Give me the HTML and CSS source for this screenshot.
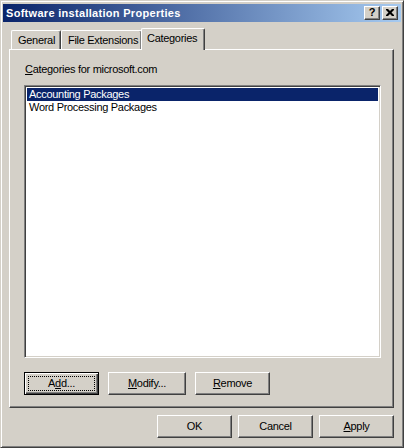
FILE: index.html
```html
<!DOCTYPE html>
<html>
<head>
<meta charset="utf-8">
<link rel="stylesheet" href="styles.css">
</head>
<body>
<div class="window">
  <div class="titlebar">
    <span class="title">Software installation Properties</span>
    <div class="caps">
      <div class="cap help">?</div>
      <div class="cap close">
        <svg width="8" height="7" viewBox="0 0 8 7"><path d="M0 0h2l2 2 2-2h2v1l-2.5 2.5L8 6v1H6L4 5 2 7H0V6l2.5-2.5L0 1z" fill="#000"/></svg>
      </div>
    </div>
  </div>
  <div class="content">
    <div class="tabs">
      <div class="tab t-general">General</div>
      <div class="tab t-ext">File Extensions</div>
      <div class="tab active">Categories</div>
    </div>
    <div class="panel">
      <div class="label"><u>C</u>ategories for microsoft.com</div>
      <div class="listbox">
        <div class="item sel">Accounting Packages</div>
        <div class="item">Word Processing Packages</div>
      </div>
      <div class="btnrow">
        <div class="btn default"><span class="focus">A<u>d</u>d...</span></div>
        <div class="btn wide"><u>M</u>odify...</div>
        <div class="btn"><u>R</u>emove</div>
      </div>
    </div>
    <div class="footer">
      <div class="btn">OK</div>
      <div class="btn">Cancel</div>
      <div class="btn"><u>A</u>pply</div>
    </div>
  </div>
</div>
</body>
</html>
```
FILE: styles.css
```css
* { box-sizing: border-box; }
html, body { margin: 0; padding: 0; background: #D4D0C8; }
body {
  font-family: "Liberation Sans", Arial, sans-serif;
  font-size: 11px;
  letter-spacing: -0.3px;
  color: #000;
}
.window {
  width: 404px;
  height: 448px;
  background: #D4D0C8;
  border: 1px solid;
  border-color: #D4D0C8 #404040 #404040 #D4D0C8;
  box-shadow: inset 1px 1px #FFFFFF, inset -1px -1px #808080;
  padding: 3px 2px 2px 2px;
  display: flex;
  flex-direction: column;
}
.titlebar {
  height: 18px;
  background: linear-gradient(to right, #0A246A, #A6CAF0);
  display: flex;
  align-items: center;
  justify-content: space-between;
  padding: 0 3px 0 3px;
}
.title {
  color: #fff;
  font-weight: bold;
  font-size: 11px;
  letter-spacing: 0.3px;
}
.caps { display: flex; gap: 2px; }
.cap {
  width: 16px;
  height: 14px;
  background: #D4D0C8;
  border: 1px solid;
  border-color: #FFFFFF #404040 #404040 #FFFFFF;
  box-shadow: inset -1px -1px #808080;
  display: flex;
  align-items: center;
  justify-content: center;
  font-weight: bold;
  font-size: 11px;
  letter-spacing: 0;
  line-height: 1;
}
.help { padding-bottom: 1px; }
.close svg { display: block; margin-top: -1px; }
.content {
  flex: 1;
  display: flex;
  flex-direction: column;
  padding: 6px 7px 0 6px;
}
.tabs {
  display: flex;
  align-items: flex-end;
  height: 21px;
  padding-left: 2px;
}
.tab {
  height: 19px;
  padding: 0 0 0 6px;
  border-top: 1px solid #fff;
  border-left: 1px solid #fff;
  border-right: 1px solid #404040;
  box-shadow: inset -1px 0 #808080;
  border-radius: 2px 2px 0 0;
  line-height: 18px;
  background: #D4D0C8;
  white-space: nowrap;
}
.t-general { width: 50px; }
.t-ext { width: 81px; margin-left: 0; }
.tab.active {
  width: 64px;
  height: 22px;
  margin-left: -1px;
  margin-bottom: -1px;
  padding-left: 5px;
  line-height: 18px;
  position: relative;
  z-index: 1;
}
.panel {
  height: 359px;
  border: 1px solid;
  border-color: #FFFFFF #404040 #404040 #FFFFFF;
  box-shadow: inset -1px -1px #808080;
  padding: 13px 13px 0 14px;
  display: flex;
  flex-direction: column;
}
.label {
  height: 13px;
  line-height: 13px;
  padding-left: 1px;
}
.listbox {
  margin-top: 9px;
  width: 357px;
  height: 273px;
  background: #fff;
  border: 1px solid;
  border-color: #808080 #FFFFFF #FFFFFF #808080;
  box-shadow: inset 1px 1px #404040, inset -1px -1px #D4D0C8;
  padding: 2px;
}
.item {
  height: 13px;
  line-height: 13px;
  padding-left: 2px;
  white-space: nowrap;
}
.item.sel {
  background: #0A246A;
  color: #fff;
}
.btnrow {
  margin-top: 14px;
  display: flex;
  gap: 9px;
}
.btn {
  width: 75px;
  height: 23px;
  background: #D4D0C8;
  border: 1px solid;
  border-color: #FFFFFF #404040 #404040 #FFFFFF;
  box-shadow: inset -1px -1px #808080;
  display: flex;
  align-items: center;
  justify-content: center;
  line-height: 13px;
}
.btn.wide { width: 78px; }
.btn.default {
  border: 1px solid #000;
  box-shadow: inset 1px 1px #FFFFFF, inset -1px -1px #404040, inset -2px -2px #808080;
  padding: 3px;
}
.focus {
  flex: 1;
  align-self: stretch;
  border: 1px dotted #000;
  display: flex;
  align-items: center;
  justify-content: center;
}
.footer {
  margin-top: 7px;
  display: flex;
  justify-content: flex-end;
  gap: 6px;
}
u { text-decoration: underline; text-underline-offset: 1px; }
```
